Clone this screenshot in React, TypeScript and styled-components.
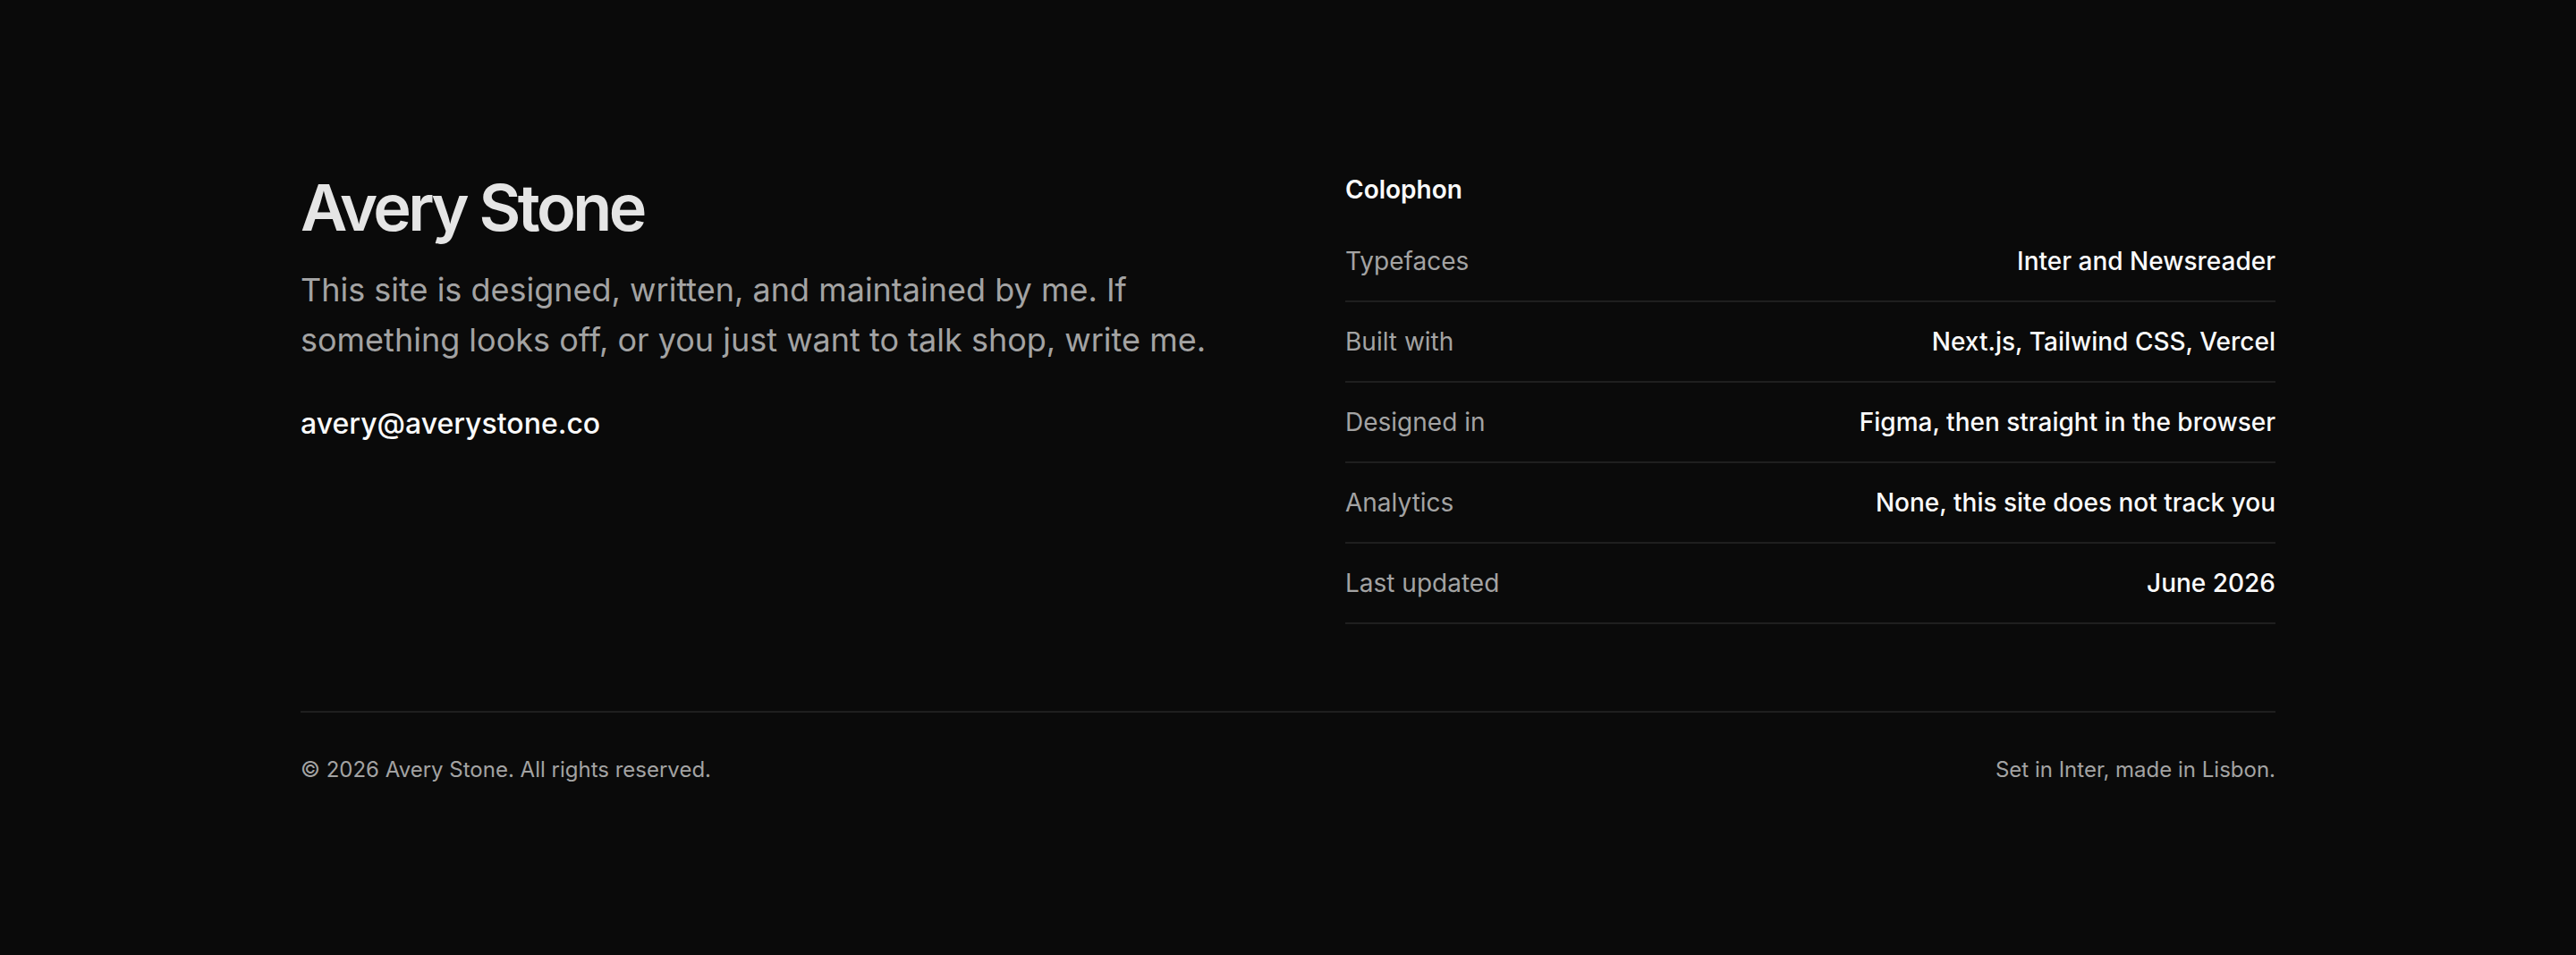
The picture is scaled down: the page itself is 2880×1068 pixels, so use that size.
import React from "react";
import styled, { createGlobalStyle } from "styled-components";

const Global = createGlobalStyle`
  html, body { margin: 0; padding: 0; background: #0a0a0a; }
  body { font-family: Inter, "Noto Sans", sans-serif; -webkit-font-smoothing: antialiased; }
  * { box-sizing: border-box; }
`;

const Page = styled.footer`
  min-height: 1068px;
  background: #0a0a0a;
  padding: 192px 0 190px;
`;

const Container = styled.div`
  width: 2208px;
  margin: 0 auto;
`;

const Grid = styled.div`
  display: grid;
  grid-template-columns: 1fr 1fr;
  column-gap: 128px;
  align-items: start;
`;

const Intro = styled.div`
  display: flex;
  flex-direction: column;
`;

const Name = styled.h2`
  margin: 0;
  font-size: 72px;
  line-height: 80px;
  font-weight: 600;
  letter-spacing: -0.05em;
  color: #e5e5e5;
`;

const Blurb = styled.p`
  margin: 24px 0 0;
  font-size: 36px;
  line-height: 56px;
  color: #a3a3a3;
`;

const Email = styled.a`
  margin-top: 42px;
  font-size: 32px;
  line-height: 48px;
  font-weight: 500;
  color: #fafafa;
  text-decoration: none;
`;

const Colophon = styled.section`
  display: flex;
  flex-direction: column;
`;

const ColophonTitle = styled.h3`
  margin: 0 0 16px;
  font-size: 28px;
  line-height: 40px;
  font-weight: 600;
  color: #fafafa;
`;

const List = styled.dl`
  margin: 0;
  display: flex;
  flex-direction: column;
`;

const Row = styled.div`
  display: flex;
  justify-content: space-between;
  align-items: baseline;
  padding: 24px 0;
  border-bottom: 2px solid #1f1f1f;
`;

const Term = styled.dt`
  font-size: 28px;
  line-height: 40px;
  color: #a3a3a3;
`;

const Value = styled.dd`
  margin: 0;
  font-size: 28px;
  line-height: 40px;
  font-weight: 500;
  color: #fafafa;
  text-align: right;
`;

const Bottom = styled.div`
  margin-top: 97px;
  padding-top: 48px;
  border-top: 2px solid #1f1f1f;
  display: flex;
  justify-content: space-between;
  align-items: center;
`;

const Small = styled.p`
  margin: 0;
  font-size: 24px;
  line-height: 32px;
  color: #a3a3a3;
`;

const rows: [string, string][] = [
  ["Typefaces", "Inter and Newsreader"],
  ["Built with", "Next.js, Tailwind CSS, Vercel"],
  ["Designed in", "Figma, then straight in the browser"],
  ["Analytics", "None, this site does not track you"],
  ["Last updated", "June 2026"],
];

export default function App() {
  return (
    <>
      <Global />
      <Page>
        <Container>
          <Grid>
            <Intro>
              <Name>Avery Stone</Name>
              <Blurb>
                This site is designed, written, and maintained by me. If something looks off, or
                you just want to talk shop, write me.
              </Blurb>
              <Email href="#">avery@averystone.co</Email>
            </Intro>
            <Colophon>
              <ColophonTitle>Colophon</ColophonTitle>
              <List>
                {rows.map(([k, v]) => (
                  <Row key={k}>
                    <Term>{k}</Term>
                    <Value>{v}</Value>
                  </Row>
                ))}
              </List>
            </Colophon>
          </Grid>
          <Bottom>
            <Small>© 2026 Avery Stone. All rights reserved.</Small>
            <Small>Set in Inter, made in Lisbon.</Small>
          </Bottom>
        </Container>
      </Page>
    </>
  );
}
